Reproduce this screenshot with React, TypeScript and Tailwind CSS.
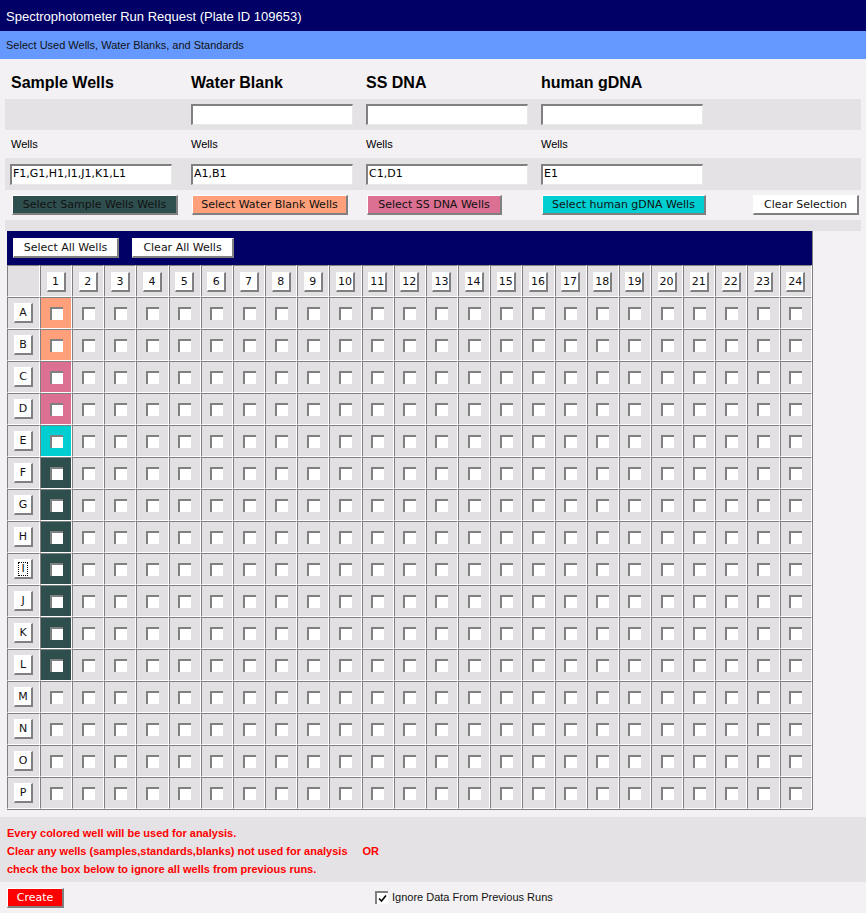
import React from 'react';

const COLS = Array.from({ length: 24 }, (_, i) => i + 1);
const ROWS = 'ABCDEFGHIJKLMNOP'.split('');

// wells already assigned in column 1
const assigned: Record<string, string> = {
  A: 'bg-[#ffa07a]',
  B: 'bg-[#ffa07a]',
  C: 'bg-[#db7093]',
  D: 'bg-[#db7093]',
  E: 'bg-[#00ced1]',
  F: 'bg-[#2f4f4f]',
  G: 'bg-[#2f4f4f]',
  H: 'bg-[#2f4f4f]',
  I: 'bg-[#2f4f4f]',
  J: 'bg-[#2f4f4f]',
  K: 'bg-[#2f4f4f]',
  L: 'bg-[#2f4f4f]',
};

const cellBorder =
  'border-t border-l border-r border-b border-t-[#808080] border-l-[#808080] border-r-white border-b-white';

function Btn({ children, className = '' }: { children: React.ReactNode; className?: string }) {
  return (
    <button
      className={`h-[20px] flex items-center justify-center border-t border-l border-r-2 border-b-2 border-t-white border-l-white border-r-[#808080] border-b-[#808080] text-[11px] leading-none text-[#111] font-['DejaVu_Sans',sans-serif] ${className}`}
    >
      {children}
    </button>
  );
}

function TextBox({ value = '' }: { value?: string }) {
  return (
    <div className="w-[162px] h-[21px] bg-white border-t-2 border-l-2 border-r border-b border-t-[#808080] border-l-[#808080] border-r-[#e8e8e8] border-b-[#e8e8e8] flex items-center pl-[1px] text-[11px] text-black font-['DejaVu_Sans',sans-serif]">
      {value}
    </div>
  );
}

function Box({ checked = false }: { checked?: boolean }) {
  return (
    <span className="inline-flex w-[13px] h-[13px] bg-white border-t-2 border-l-2 border-t-[#808080] border-l-[#808080] items-center justify-center">
      {checked && (
        <svg width="9" height="9" viewBox="0 0 9 9">
          <path d="M1 4.5 L3.5 7 L8 1.5" stroke="#000" strokeWidth="1.6" fill="none" />
        </svg>
      )}
    </span>
  );
}

export default function App() {
  return (
    <div className="w-[866px] h-[913px] overflow-hidden bg-[#f3f1f3] font-['Liberation_Sans',Arial,sans-serif] text-black">
      {/* Title */}
      <div className="h-[31px] bg-[#000066] text-white text-[13px] flex items-center pl-[6px] pt-[2px]">
        Spectrophotometer Run Request (Plate ID 109653)
      </div>
      <div className="h-[28px] bg-[#6699ff] text-[#111] text-[11px] flex items-center pl-[6px] pt-[1px]">
        Select Used Wells, Water Blanks, and Standards
      </div>

      <div className="mx-[5px]">
        {/* Headings */}
        <div className="grid grid-cols-[181px_175px_175px_175px_1fr] pl-[5px] h-[40px] pt-[15px] text-[16px] font-bold leading-[18px]">
          <div className="pl-[1px]">Sample Wells</div>
          <div>Water Blank</div>
          <div>SS DNA</div>
          <div>human gDNA</div>
          <div />
        </div>
        <div className="grid grid-cols-[181px_175px_175px_175px_1fr] pl-[5px] h-[31px] items-center bg-[#e4e2e4]">
          <div />
          <TextBox />
          <TextBox />
          <TextBox />
          <div />
        </div>
        <div className="grid grid-cols-[181px_175px_175px_175px_1fr] pl-[5px] h-[28px] items-center text-[11px]">
          <div className="pl-[1px]">Wells</div>
          <div>Wells</div>
          <div>Wells</div>
          <div>Wells</div>
          <div />
        </div>
        <div className="grid grid-cols-[181px_175px_175px_175px_1fr] pl-[5px] h-[32px] items-center bg-[#e4e2e4]">
          <TextBox value="F1,G1,H1,I1,J1,K1,L1" />
          <TextBox value="A1,B1" />
          <TextBox value="C1,D1" />
          <TextBox value="E1" />
          <div />
        </div>
        <div className="grid grid-cols-[181px_175px_175px_175px_1fr] pl-[5px] h-[30px] items-center">
          <Btn className="ml-[2px] w-[166px] bg-[#2f4f4f]">Select Sample Wells Wells</Btn>
          <Btn className="ml-[1px] w-[156px] bg-[#ffa07a]">Select Water Blank Wells</Btn>
          <Btn className="ml-[1px] w-[135px] bg-[#db7093]">Select SS DNA Wells</Btn>
          <Btn className="ml-[1px] w-[164px] bg-[#00ced1]">Select human gDNA Wells</Btn>
          <div className="flex justify-end pr-[2px]">
            <Btn className="w-[106px] bg-white">Clear Selection</Btn>
          </div>
        </div>
        <div className="h-[11px] bg-[#e4e2e4]" />

        {/* Plate grid */}
        <table className="ml-[2px] w-[806px] table-fixed border-separate border-spacing-0 border-r border-b border-[#808080]">
          <colgroup>
            <col className="w-[33px]" />
            {COLS.map((c) => (
              <col key={c} />
            ))}
          </colgroup>
          <tbody>
            <tr>
              <td colSpan={25} className="h-[34px] bg-[#000066] p-0">
                <div className="flex items-center gap-[13px] pl-[6px]">
                  <Btn className="w-[106px] bg-white">Select All Wells</Btn>
                  <Btn className="w-[102px] bg-white">Clear All Wells</Btn>
                </div>
              </td>
            </tr>
            <tr>
              <td className={`h-[32px] p-0 bg-[#e2e0e2] ${cellBorder}`} />
              {COLS.map((c) => (
                <td key={c} className={`h-[32px] p-0 bg-[#e2e0e2] ${cellBorder}`}>
                  <div className="flex justify-center pt-[1px]">
                    <Btn className="w-[19px] h-[16px] text-[10px] bg-white">{c}</Btn>
                  </div>
                </td>
              ))}
            </tr>
            {ROWS.map((r) => (
              <tr key={r}>
                <td className={`h-[32px] p-0 bg-[#e2e0e2] ${cellBorder}`}>
                  <div className="flex justify-center">
                    <Btn className="w-[19px] bg-white">
                      {r === 'I' ? (
                        <span className="border border-dotted border-black px-[2px] leading-[12px]">I</span>
                      ) : (
                        r
                      )}
                    </Btn>
                  </div>
                </td>
                {COLS.map((c) => (
                  <td
                    key={c}
                    className={`h-[32px] p-0 ${c === 1 && assigned[r] ? assigned[r] : 'bg-[#e2e0e2]'} ${cellBorder}`}
                  >
                    <div className="flex justify-center items-center">
                      <Box />
                    </div>
                  </td>
                ))}
              </tr>
            ))}
          </tbody>
        </table>
      </div>

      <div className="h-[7px]" />
      {/* Notes */}
      <div className="h-[65px] bg-[#e4e2e4] pl-[7px] pt-[7px] text-[11px] font-bold leading-[18px] text-[#ff0000]">
        <div>Every colored well will be used for analysis.</div>
        <div>
          Clear any wells (samples,standards,blanks) not used for analysis
          <span className="ml-[15px]">OR</span>
        </div>
        <div>check the box below to ignore all wells from previous runs.</div>
      </div>

      <div className="h-[31px] flex items-center">
        <Btn className="ml-[7px] w-[57px] bg-[#ff0000] text-white">Create</Btn>
        <div className="ml-[311px] flex items-center gap-[4px] text-[11px] text-[#111]">
          <Box checked />
          <span>Ignore Data From Previous Runs</span>
        </div>
      </div>
    </div>
  );
}
